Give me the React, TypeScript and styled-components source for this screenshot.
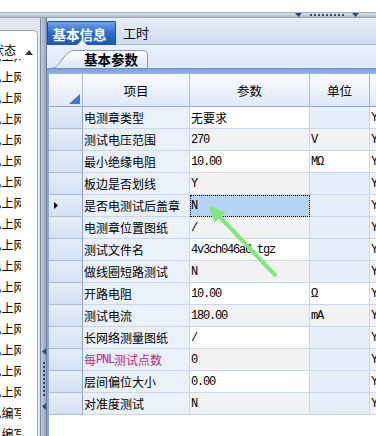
import React from 'react'
import styled, { createGlobalStyle } from 'styled-components'

const GlobalStyle = createGlobalStyle`
	* { box-sizing: border-box; }
	html, body { margin: 0; padding: 0; background: #fff; }
	body {
		width: 376px;
		height: 436px;
		overflow: hidden;
		font-family: "Noto Sans CJK SC", "Noto Sans", sans-serif;
		color: #000;
	}
`

const Page = styled.div`
	width: 376px;
	height: 436px;
	display: flex;
	flex-direction: column;
	overflow: hidden;
`

const TopGap = styled.div`
	height: 12px;
	flex: none;
	background: #fff;
`

const HSplit = styled.div`
	height: 6px;
	flex: none;
	background: linear-gradient(#dde2e9, #b3bccb);
	border-top: 1px solid #a3adbc;
	border-bottom: 1px solid #98a3b5;
	display: flex;
	align-items: center;
	justify-content: flex-end;
	gap: 8px;
	padding-right: 17px;
`

const Dots = styled.div<{ vertical?: boolean }>`
	display: flex;
	flex-direction: ${(p) => (p.vertical ? 'column' : 'row')};
	gap: 2px;
`

const Dot = styled.span`
	width: 2px;
	height: 2px;
	background: #2c4a78;
`

const Body = styled.div`
	flex: 1;
	display: flex;
	min-height: 0;
`

const LeftPane = styled.div`
	width: 40px;
	flex: none;
	background: #e2e6ed;
	padding: 12px 2px 0 0;
	display: flex;
`

const LeftPanel = styled.div`
	flex: 1;
	background: #fff;
	border-top: 1px solid #9ea8b8;
	border-right: 1px solid #9ea8b8;
	border-top-right-radius: 5px;
	display: flex;
	overflow: hidden;
`

const ListCol = styled.div`
	width: 21px;
	flex: none;
	overflow: hidden;
	padding-top: 10px;
	display: flex;
	flex-direction: column;
	font-size: 12px;
`

const ListHead = styled.div`
	height: 18px;
	line-height: 18px;
	flex: none;
	white-space: nowrap;
	text-indent: -8px;
	background: #fff;
`

const ListBody = styled.div`
	flex: 1;
	min-height: 0;
	overflow: hidden;
	display: flex;
	flex-direction: column;
`

const ListRow = styled.div<{ first?: boolean }>`
	height: 21px;
	flex: none;
	line-height: 21px;
	white-space: nowrap;
	text-indent: -10.5px;
	margin-top: ${(p) => (p.first ? '-14px' : '0')};
`

const ScrollCol = styled.div`
	flex: 1;
	display: flex;
	justify-content: center;
	padding-top: 19px;
`

const VSplit = styled.div`
	width: 7px;
	flex: none;
	background: linear-gradient(90deg, #c2cbd9, #a7b4c8 60%, #98a6bc);
	border-left: 1px solid #7d8ba2;
	border-right: 1px solid #6e7e97;
	display: flex;
	flex-direction: column;
	align-items: center;
	justify-content: flex-end;
	gap: 7px;
	padding-bottom: 26px;
`

const RightPane = styled.div`
	flex: 1;
	min-width: 0;
	display: flex;
	flex-direction: column;
`

const TabStrip = styled.div`
	height: 27px;
	flex: none;
	background: linear-gradient(#e6eef9, #cfdcef);
	border-bottom: 1px solid #a9bedc;
	display: flex;
	align-items: flex-end;
`

const ActiveTab = styled.div`
	position: relative;
	width: 69px;
	height: 24px;
	margin-bottom: -1px;
	background: linear-gradient(#6ea2e8, #2b6bcb 50%, #1c57b4);
	border: 1px solid #1d4f9b;
	border-bottom: none;
	border-radius: 2px 2px 0 0;
	color: #fff;
	font-weight: bold;
	font-size: 13.5px;
	display: flex;
	align-items: center;
	justify-content: center;
	padding-right: 4px;

	&::after {
		content: '';
		position: absolute;
		left: 29px;
		bottom: 0;
		border-left: 5px solid transparent;
		border-right: 5px solid transparent;
		border-bottom: 5px solid #fff;
	}
`

const PlainTab = styled.div`
	height: 24px;
	padding-left: 7px;
	font-size: 13px;
	display: flex;
	align-items: center;
`

const SubStrip = styled.div`
	height: 23px;
	flex: none;
	background: linear-gradient(#eaf1fa, #dde7f5);
	display: flex;
	align-items: flex-end;
	padding-left: 5px;
`

const SubTab = styled.div`
	position: relative;
	width: 96px;
	height: 19px;
	padding-left: 22px;
	font-weight: bold;
	font-size: 13.5px;
	display: flex;
	align-items: center;
	justify-content: center;

	svg {
		position: absolute;
		left: 0;
		top: 0;
	}
	span {
		position: relative;
	}
`

const Band = styled.div`
	height: 6px;
	flex: none;
	background: linear-gradient(#79a1da, #96b7e6);
	border-top: 1px solid #6b91c9;
`

const GridWrap = styled.div`
	flex: 1;
	position: relative;
	border-left: 2px solid #86a9dc;
	background: #fff;
	overflow: hidden;
`

const Grid = styled.div`
	display: grid;
	grid-template-columns: 34px 107px 120px 60px 60px;
	grid-template-rows: 33px;
	grid-auto-rows: 22px;
`

const HeadCell = styled.div<{ corner?: boolean }>`
	background: linear-gradient(#fbfcfe, #dfe8f5);
	border-right: 1px solid #a7bbd8;
	border-bottom: 1px solid #8fa8cf;
	display: flex;
	align-items: ${(p) => (p.corner ? 'flex-end' : 'center')};
	justify-content: ${(p) => (p.corner ? 'flex-end' : 'center')};
	padding: ${(p) => (p.corner ? '0 2px 2px 0' : '0')};
	font-size: 12.5px;
`

const RowHead = styled.div`
	background: linear-gradient(#e4ecf8, #d5e1f2);
	border-right: 1px solid #8fa5c6;
	border-bottom: 1px solid #a9bcd8;
	display: flex;
	align-items: center;
	padding-left: 5px;
`

const Cell = styled.div<{ bg: string; mono?: boolean; tone?: string; selected?: boolean }>`
	background: ${(p) => p.bg};
	border-right: 1px solid #c6d6ec;
	border-bottom: 1px solid #c6d6ec;
	display: flex;
	align-items: center;
	padding-left: 1px;
	white-space: nowrap;
	overflow: hidden;
	color: ${(p) => p.tone || '#000'};
	font-size: 12px;
	font-family: ${(p) =>
		p.mono ? '"Liberation Mono", "Noto Sans CJK SC", monospace' : '"Noto Sans CJK SC", sans-serif'};
	letter-spacing: ${(p) => (p.mono ? '-1.2px' : '0')};
	outline: ${(p) => (p.selected ? '1px dotted #000' : 'none')};
	outline-offset: -1px;
`

const Latin = styled.span`
	font-family: "Liberation Mono", monospace;
	letter-spacing: -1.2px;
`

const Overlay = styled.svg`
	position: absolute;
	left: 0;
	top: 0;
	pointer-events: none;
`

const DownArrow = () => (
	<svg width="7" height="4" viewBox="0 0 7 4">
		<path d="M0 0 L7 0 L3.5 4 Z" fill="#2c4a78" />
	</svg>
)

const LeftArrow = () => (
	<svg width="4" height="7" viewBox="0 0 4 7">
		<path d="M4 0 L4 7 L0 3.5 Z" fill="#2c4a78" />
	</svg>
)

const rows = [
	{ name: '电测章类型', value: '无要求', unit: '' },
	{ name: '测试电压范围', value: '270', unit: 'V' },
	{ name: '最小绝缘电阻', value: '10.00', unit: 'MΩ' },
	{ name: '板边是否划线', value: 'Y', unit: '' },
	{ name: '是否电测试后盖章', value: 'N', unit: '' },
	{ name: '电测章位置图纸', value: '/', unit: '' },
	{ name: '测试文件名', value: '4v3ch046a6.tgz', unit: '' },
	{ name: '做线圈短路测试', value: 'N', unit: '' },
	{ name: '开路电阻', value: '10.00', unit: 'Ω' },
	{ name: '测试电流', value: '180.00', unit: 'mA' },
	{ name: '长网络测量图纸', value: '/', unit: '' },
	{ name: '每PNL测试点数', value: '0', unit: '' },
	{ name: '层间偏位大小', value: '0.00', unit: '' },
	{ name: '对准度测试', value: 'N', unit: '' }
]

const currentRow = 4

const listItems = [
	...Array.from({ length: 17 }, () => '已上网'),
	'已编写',
	'已编写'
]

const renderName = (name: string) => {
	const m = name.match(/^(.*?)([A-Za-z]+)(.*)$/)
	if (!m) return name
	return (
		<>
			{m[1]}
			<Latin>{m[2]}</Latin>
			{m[3]}
		</>
	)
}

const App: React.FC = () => {
	return (
		<>
			<GlobalStyle />
			<Page>
				<TopGap />
				<HSplit>
					<DownArrow />
					<Dots>
						{Array.from({ length: 9 }, (_, i) => (
							<Dot key={i} />
						))}
					</Dots>
					<DownArrow />
				</HSplit>
				<Body>
					<LeftPane>
						<LeftPanel>
							<ListCol>
								<ListHead>状态</ListHead>
								<ListBody>
									{listItems.map((item, i) => (
										<ListRow key={i} first={i === 0}>
											{item}
										</ListRow>
									))}
								</ListBody>
							</ListCol>
							<ScrollCol>
								<svg width="8" height="5" viewBox="0 0 8 5">
									<path d="M0 5 L8 5 L4 0 Z" fill="#3a3a3a" />
								</svg>
							</ScrollCol>
						</LeftPanel>
					</LeftPane>
					<VSplit>
						<LeftArrow />
						<Dots vertical>
							{Array.from({ length: 9 }, (_, i) => (
								<Dot key={i} />
							))}
						</Dots>
						<LeftArrow />
					</VSplit>
					<RightPane>
						<TabStrip>
							<ActiveTab>基本信息</ActiveTab>
							<PlainTab>工时</PlainTab>
						</TabStrip>
						<SubStrip>
							<SubTab>
								<svg width="96" height="19" viewBox="0 0 96 19">
									<defs>
										<linearGradient id="subtab" x1="0" y1="0" x2="0" y2="1">
											<stop offset="0" stopColor="#ffffff" />
											<stop offset="1" stopColor="#dbe6f6" />
										</linearGradient>
									</defs>
									<path
										d="M0.5 19 C8 19 12 1.5 22 1.5 L91.5 1.5 Q95.5 1.5 95.5 5.5 L95.5 19"
										fill="url(#subtab)"
										stroke="#7f9cc6"
									/>
								</svg>
								<span>基本参数</span>
							</SubTab>
						</SubStrip>
						<Band />
						<GridWrap>
							<Grid>
								<HeadCell corner>
									<svg width="11" height="10" viewBox="0 0 11 10">
										<path d="M0 10 L11 0 L11 10 Z" fill="#3f78c8" />
									</svg>
								</HeadCell>
								<HeadCell>项目</HeadCell>
								<HeadCell>参数</HeadCell>
								<HeadCell>单位</HeadCell>
								<HeadCell />
								{rows.map((r, i) => {
									const rowBg = i % 2 === 0 ? '#ffffff' : '#f2f2f2'
									const cjkValue = /[\u4e00-\u9fff]/.test(r.value)
									return (
										<React.Fragment key={i}>
											<RowHead>
												{i === currentRow && (
													<svg width="4" height="7" viewBox="0 0 4 7">
														<path d="M0 0 L4 3.5 L0 7 Z" fill="#000" />
													</svg>
												)}
											</RowHead>
											<Cell bg="#eaf0fa" tone={i === 11 ? '#b42882' : undefined}>
												{renderName(r.name)}
											</Cell>
											<Cell
												bg={i === currentRow ? '#b5d3f4' : rowBg}
												mono={!cjkValue}
												selected={i === currentRow}
											>
												{r.value}
											</Cell>
											<Cell bg={r.unit ? rowBg : '#e6eefa'} mono>
												{r.unit}
											</Cell>
											<Cell bg={rowBg} mono>
												Y
											</Cell>
										</React.Fragment>
									)
								})}
							</Grid>
							<Overlay width="329" height="362" viewBox="0 0 329 362">
								<line
									x1="226"
									y1="201"
									x2="170"
									y2="142"
									stroke="#80e87c"
									strokeWidth="4"
									strokeLinecap="round"
								/>
								<path d="M160 132 L165.2 149 L176.8 138 Z" fill="#80e87c" />
							</Overlay>
						</GridWrap>
					</RightPane>
				</Body>
			</Page>
		</>
	)
}

export default App
